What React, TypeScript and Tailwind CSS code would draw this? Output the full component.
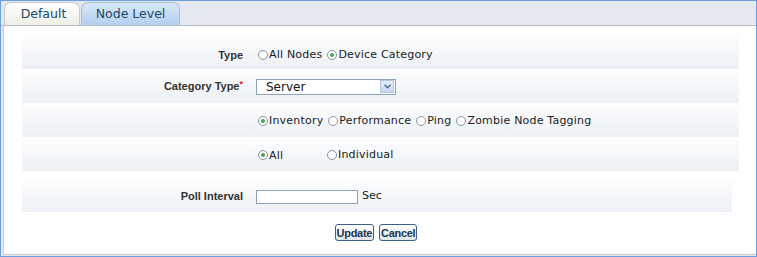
import React from 'react';

function Radio({ checked, label }: { checked?: boolean; label: string }) {
  return (
    <span className="inline-flex items-center">
      <span className="w-[10px] h-[10px] rounded-full border border-[#8a949c] bg-white flex items-center justify-center mr-[1px] -mt-[2px]">
        {checked && <span className="w-[4px] h-[4px] rounded-full bg-[#3fae49]" />}
      </span>
      <span>{label}</span>
    </span>
  );
}

function Row({ label, required, children, className = '' }: { label?: string; required?: boolean; children: React.ReactNode; className?: string }) {
  return (
    <div className={`flex items-center bg-gradient-to-b from-[#fbfcfd] to-[#edf1f5] ${className}`}>
      <div className="w-[221px] text-right font-bold text-[11px] text-[#333]" style={{ fontFamily: '"Liberation Sans", Arial, sans-serif' }}>
        {label}
        {required && <span className="text-[#e0202a] text-[9px] align-top">*</span>}
      </div>
      <div className="ml-[13px] flex items-center gap-[4px] text-[11px] tracking-[0.2px] text-[#222]">{children}</div>
    </div>
  );
}

export default function App() {
  return (
    <div className="w-[757px] h-[257px] border border-[#6f9ee0] bg-[#e4e9f0] flex flex-col" style={{ fontFamily: '"DejaVu Sans", Verdana, sans-serif' }}>
      <div className="h-[25px] flex items-end pl-[3px] gap-[1px] border-b border-[#b7bec3]">
        <div className="w-[76px] h-[23px] pt-[1px] pl-[3px] rounded-t-[7px] border border-b-0 border-[#c3cbcf] bg-gradient-to-b from-[#ffffff] to-[#eef0e6] flex items-center justify-center text-[12.5px] text-[#1d4866]">
          Default
        </div>
        <div className="w-[99px] h-[23px] pt-[1px] rounded-t-[7px] border border-b-0 border-[#a6bfdc] bg-gradient-to-b from-[#d9e8f8] to-[#b3cff0] flex items-center justify-center text-[12.5px] text-[#1d4866]">
          Node Level
        </div>
      </div>
      <div className="flex-1 bg-white ml-[2px] mb-[1px] border-l border-b border-[#c7cbce] pt-[10px]">
        <div className="ml-[18px] w-[717px] flex flex-col gap-[3px]">
          <Row label="Type" className="h-[33px] pt-[6px]">
            <span className="ml-[2px] flex items-center gap-[5px]">
              <Radio label="All Nodes" />
              <Radio checked label="Device Category" />
            </span>
          </Row>
          <Row label="Category Type" required className="h-[31px] pb-[2px]">
            <div className="w-[140px] h-[16px] border border-[#8ea3bb] bg-white flex items-center justify-between tracking-normal">
              <span className="pl-[9px] text-[12px] text-[#111]">Server</span>
              <span className="w-[14px] h-[13px] mr-[1px] bg-gradient-to-b from-[#e6eefa] to-[#c4d6ef] border border-[#b4c6de] flex items-center justify-center">
                <svg width="7" height="5" viewBox="0 0 7 5"><path d="M0.5 0.8 L3.5 3.8 L6.5 0.8" fill="none" stroke="#4d6b94" strokeWidth="1.4" /></svg>
              </span>
            </div>
          </Row>
          <Row className="h-[31px]">
            <span className="ml-[2px] flex items-center gap-[5px]">
              <Radio checked label="Inventory" />
              <Radio label="Performance" />
              <Radio label="Ping" />
              <Radio label="Zombie Node Tagging" />
            </span>
          </Row>
          <Row className="h-[31px]">
            <span className="ml-[2px] flex items-center">
              <span className="w-[69px]"><Radio checked label="All" /></span>
              <Radio label="Individual" />
            </span>
          </Row>
          <Row label="Poll Interval" className="h-[31px] mt-[7px] w-[710px]">
            <input className="w-[102px] h-[14px] border border-[#8ea3bb] bg-white" />
            <span className="text-[11px] tracking-normal text-[#222]">Sec</span>
          </Row>
        </div>
        <div className="flex justify-center gap-[5px] mt-[12px] pr-[8px]">
          {['Update', 'Cancel'].map((b) => (
            <button key={b} className="h-[17px] px-[1px] rounded-[3px] border border-[#3c5f86] bg-gradient-to-b from-[#ffffff] to-[#dfe6ee] text-[11px] font-bold tracking-[-0.3px] text-[#1e3550]" style={{ fontFamily: '"Liberation Sans", Arial, sans-serif' }}>
              {b}
            </button>
          ))}
        </div>
      </div>
    </div>
  );
}
